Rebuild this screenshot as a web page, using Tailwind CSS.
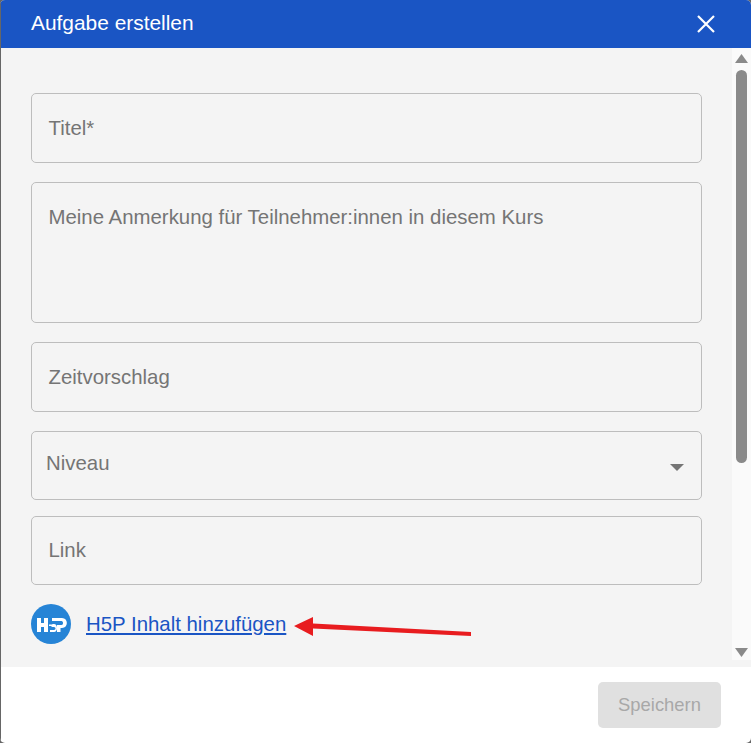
<!DOCTYPE html>
<html lang="en">

<head>
    <meta charset="UTF-8" />
    <title>Aufgabe erstellen</title>
    <script src="https://cdn.jsdelivr.net/npm/@tailwindcss/browser@4"></script>
</head>

<body class="bg-[#666666] font-['Liberation_Sans',sans-serif]">
    <div class="relative w-[751px] h-[743px] bg-white rounded-[5px] overflow-hidden flex flex-col">
        <header class="h-[48px] shrink-0 bg-[#1a55c4] flex items-center justify-between pl-[31px] pr-[35px]">
            <h1 class="text-white text-[20.9px] -mt-[2px]">Aufgabe erstellen</h1>
            <svg width="20" height="20" viewBox="0 0 20 20" class="block">
                <path d="M2 2 L18 18 M18 2 L2 18" stroke="#fff" stroke-width="2.2" fill="none" />
            </svg>
        </header>

        <div class="h-[619px] shrink-0 flex bg-[#f4f4f4] ml-px">
            <form class="w-[731px] shrink-0 pl-[30px] pt-[45px] relative">
                <div class="w-[671px] h-[70px] border border-[#bdbdbd] rounded-[5px] flex items-center px-[16.500px] text-[20.4px] text-[#757575]">Titel*</div>
                <div class="w-[671px] h-[141px] mt-[19px] border border-[#bdbdbd] rounded-[5px] px-[16.500px] pt-[22px] text-[20.4px] leading-[24px] text-[#757575]">Meine Anmerkung für Teilnehmer:innen in diesem Kurs</div>
                <div class="w-[671px] h-[70px] mt-[19px] border border-[#bdbdbd] rounded-[5px] flex items-center px-[16.500px] text-[20.4px] text-[#757575]">Zeitvorschlag</div>
                <div class="w-[671px] h-[69px] mt-[19px] border border-[#bdbdbd] rounded-[5px] flex items-center justify-between pl-[14px] pr-[17px] pb-[5px] text-[20.4px] text-[#757575]">
                    <span>Niveau</span>
                    <svg width="14" height="7" viewBox="0 0 14 7" class="block mt-[9px]"><path d="M0 0 H14 L7 7 Z" fill="#757575" /></svg>
                </div>
                <div class="w-[671px] h-[69px] mt-[16px] border border-[#bdbdbd] rounded-[5px] flex items-center px-[16.500px] pb-[1px] text-[20.4px] text-[#757575]">Link</div>
                <div class="flex items-center gap-[15px] mt-[19px] h-[40px]">
                    <svg width="40" height="40" viewBox="0 0 40 40" class="block shrink-0">
                        <circle cx="20" cy="20" r="20" fill="#2684d6" />
                        <path d="M6 14 H10 V19 H13 V14 H17 V28 H13 V23 H10 V28 H6 Z" fill="#fff" />
                        <path d="M18 20.500 H21 V22 H18 Z M19 26 H23 C25 26 25 23 23 23 H20.500 V21.500 L21.500 20 H23 C27 20 27 28 23 28 H19 Z" fill="#fff" />
                        <path d="M21 14 H31 C37.500 14 37.500 24 31 24 H29.500 V28 H26 V21 H30.500 C32.500 21 32.500 17 30.500 17 H21 Z" fill="#fff" />
                    </svg>
                    <a href="#" class="text-[20.4px] text-[#1a55c4] underline">H5P Inhalt hinzufügen</a>
                </div>
                <svg width="180" height="24" viewBox="0 0 180 24" class="absolute left-[291px] top-[566px]">
                    <path d="M2 12 L21 3 V9.500 L179 18 V22 L21 14.500 V22 Z" fill="#e81c1f" />
                </svg>
            </form>

            <div class="w-[19px] h-[612px] bg-[#fafafa] flex flex-col items-center relative">
                <svg width="13" height="9" viewBox="0 0 13 9" class="absolute top-[6px]"><path d="M6.5 0 L13 9 H0 Z" fill="#8a8a8a" /></svg>
                <div class="absolute top-[22px] w-[11px] h-[393px] rounded-[6px] bg-[#8a8a8a]"></div>
                <svg width="13" height="9" viewBox="0 0 13 9" class="absolute top-[600px]"><path d="M0 0 H13 L6.5 9 Z" fill="#8a8a8a" /></svg>
            </div>
        </div>

        <footer class="flex-1 flex items-start justify-end pt-[15px] pr-[30px]">
            <button class="w-[123px] h-[46px] rounded-[5px] bg-[#e0e0e0] text-[#a8a8a8] text-[18.4px]">Speichern</button>
        </footer>
        <div class="absolute inset-y-0 left-0 w-px bg-[#666666]"></div>
    </div>
</body>

</html>
